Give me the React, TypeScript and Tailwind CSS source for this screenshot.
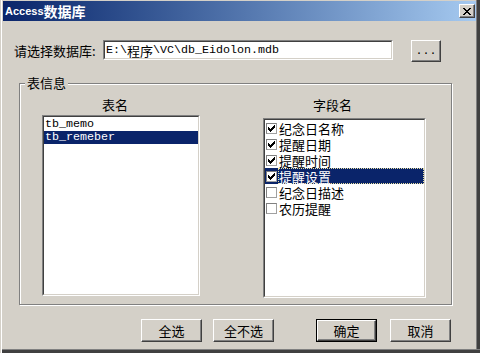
import React from 'react';

const CJK = "font-['Noto_Sans_CJK_SC',sans-serif] text-[13px] leading-[13px]";
const MONO = "font-['Liberation_Mono','Noto_Sans_CJK_SC',monospace] text-[11.67px] leading-[13px]";

const tables = ['tb_memo', 'tb_remeber'];
const fields = [
  { name: '纪念日名称', checked: true },
  { name: '提醒日期', checked: true },
  { name: '提醒时间', checked: true },
  { name: '提醒设置', checked: true, selected: true },
  { name: '纪念日描述', checked: false },
  { name: '农历提醒', checked: false },
];

function CheckMark() {
  // classic 7x7 pixel tick
  const tops = [2, 3, 4, 3, 2, 1, 0];
  return (
    <svg width="7" height="7" viewBox="0 0 7 7" shapeRendering="crispEdges">
      {tops.map((t, i) => (
        <rect key={i} x={i} y={t} width="1" height="3" fill="#000" />
      ))}
    </svg>
  );
}

function CloseGlyph() {
  const rows = [0, 1, 2, 3, 4, 5, 6];
  return (
    <svg width="8" height="7" viewBox="0 0 8 7" shapeRendering="crispEdges">
      {rows.map((i) => (
        <g key={i}>
          <rect x={i < 4 ? i : i + 0} y={i} width="2" height="1" fill="#000" />
          <rect x={6 - i} y={i} width="2" height="1" fill="#000" />
        </g>
      ))}
    </svg>
  );
}

function Button({ label, isDefault, className }: { label: string; isDefault?: boolean; className?: string }) {
  const face = (
    <div className="w-full h-full border border-t-white border-l-white border-r-[#404040] border-b-[#404040] shadow-[inset_-1px_-1px_0_#808080] flex items-center justify-center text-black">
      {label}
    </div>
  );
  return (
    <div className={`${className ?? ''} ${isDefault ? 'border border-black' : ''}`}>{face}</div>
  );
}

function Sunken({ className, children }: { className?: string; children?: React.ReactNode }) {
  return (
    <div className={`border border-t-[#808080] border-l-[#808080] border-r-white border-b-white ${className ?? ''}`}>
      <div className="w-full h-full border border-t-[#404040] border-l-[#404040] border-r-[#d4d0c8] border-b-[#d4d0c8] bg-white overflow-hidden">
        {children}
      </div>
    </div>
  );
}

export default function App() {
  return (
    <div className="w-[480px] h-[353px] bg-[#d4d0c8] flex flex-col pl-[3px] pr-[4px] pt-[1px] shadow-[inset_1px_0_0_#d4d0c8,inset_2px_0_0_#ffffff,inset_0_-3px_0_#404040,inset_0_-4px_0_#808080,inset_-3px_0_0_#404040,inset_-4px_0_0_#808080] select-none">
      {/* Title bar */}
      <div className="h-[20px] bg-gradient-to-r from-[#0a246a] to-[#a6caf0] flex items-center pl-[2px] pr-[1px] shrink-0">
        <span className="text-white font-bold flex items-center">
          <span className="font-['Liberation_Sans',sans-serif] text-[11px]">Access</span>
          <span className="font-['Noto_Sans_CJK_SC',sans-serif] text-[14px] leading-[14px]">数据库</span>
        </span>
        <div className="ml-auto w-[16px] h-[14px] bg-[#d4d0c8] border border-t-white border-l-white border-r-[#404040] border-b-[#404040] shadow-[inset_-1px_-1px_0_#808080] flex items-center justify-center">
          <CloseGlyph />
        </div>
      </div>

      {/* Database path row */}
      <div className="flex items-start mt-[19px] ml-[11px]">
        <div className={`w-[89px] h-[20px] flex items-center text-black ${CJK}`}>请选择数据库:</div>
        <Sunken className="w-[290px] h-[20px]">
          <div className="h-full flex items-center pl-[1px] text-black whitespace-nowrap">
            <span className={MONO}>{'E:\\'}</span>
            <span className={CJK}>程序</span>
            <span className={MONO}>{'\\VC\\db_Eidolon.mdb'}</span>
          </div>
        </Sunken>
        <Button label="..." className={`ml-[18px] w-[30px] h-[22px] ${MONO}`} />
      </div>

      {/* Group box */}
      <div className="relative mt-[21px] ml-[16px] w-[433px] h-[222px] border border-[#808080] shadow-[inset_1px_1px_0_#ffffff,1px_1px_0_#ffffff] flex">
        <div className={`absolute left-[5px] -top-[8px] px-[2px] bg-[#d4d0c8] text-black ${CJK}`}>表信息</div>

        <div className="flex flex-col ml-[22px] w-[158px]">
          <div className={`mt-[14px] pl-[60px] text-black ${CJK}`}>表名</div>
          <Sunken className="mt-[4px] h-[181px]">
            <div className="pt-[1px]">
              {tables.map((t, i) => (
                <div
                  key={t}
                  className={`h-[13px] pl-[1px] flex items-center ${MONO} ${i === 1 ? 'bg-[#0a246a] text-white' : 'text-black'}`}
                >
                  {t}
                </div>
              ))}
            </div>
          </Sunken>
        </div>

        <div className="flex flex-col ml-[63px] w-[163px]">
          <div className={`mt-[14px] pl-[50px] text-black ${CJK}`}>字段名</div>
          <Sunken className="mt-[7px] h-[180px]">
            {fields.map((f) => (
              <div key={f.name} className={`h-[16px] flex items-center ${f.selected ? 'bg-[#0a246a]' : ''}`}>
                <div className="ml-[1px] w-[11px] h-[11px] bg-white border border-t-[#808080] border-l-[#808080] border-r-[#a0a0a0] border-b-[#a0a0a0] flex items-start justify-start p-[1px]">
                  {f.checked && <CheckMark />}
                </div>
                <div
                  className={`ml-[1px] flex-1 h-full flex items-center ${CJK} ${
                    f.selected ? 'text-white border border-dotted border-[#e8e0a0]' : 'text-black border border-transparent'
                  }`}
                >
                  {f.name}
                </div>
              </div>
            ))}
          </Sunken>
        </div>
      </div>

      {/* Bottom buttons */}
      <div className={`flex mt-[14px] ${CJK}`}>
        <Button label="全选" className="ml-[138px] w-[61px] h-[23px]" />
        <Button label="全不选" className="ml-[11px] w-[61px] h-[23px]" />
        <Button label="确定" isDefault className="ml-[42px] w-[61px] h-[23px]" />
        <Button label="取消" className="ml-[13px] w-[61px] h-[23px]" />
      </div>
    </div>
  );
}
